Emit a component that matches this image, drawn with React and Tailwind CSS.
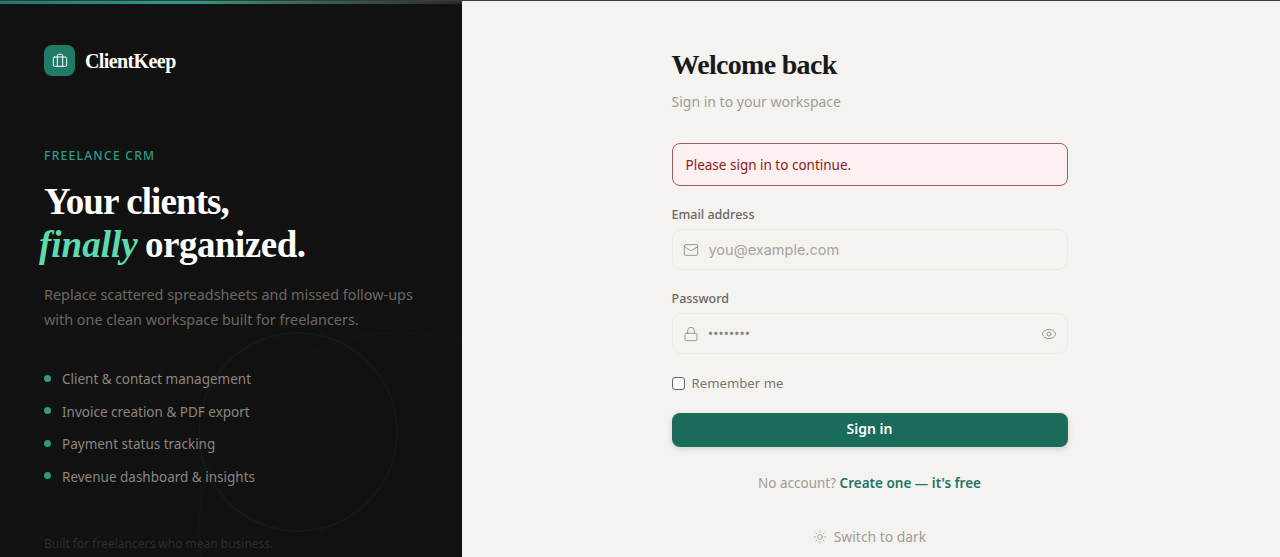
import { Briefcase, Mail, Lock, Eye, Sun } from 'lucide-react';

const features = [
  'Client & contact management',
  'Invoice creation & PDF export',
  'Payment status tracking',
  'Revenue dashboard & insights',
];

const serif = "font-['Liberation_Serif',serif]";

const BrandPanel = () => (
  <div className="relative flex h-[557px] w-[462px] shrink-0 flex-col overflow-hidden bg-[#111111] bg-[linear-gradient(90deg,rgba(255,255,255,0.005)_1px,transparent_1px)] bg-[size:40px_40px] px-11">
    <div className="absolute left-0 top-px h-[3px] w-full bg-gradient-to-r from-[#1f7a66] via-[#2a9d84] via-40% to-[#2a2a2a]" />
    <div className="absolute left-[198px] top-[332px] h-[200px] w-[200px] rounded-full border-2 border-[#2a9d84]/[0.07]" />
    <div className="absolute left-[198px] top-[332px] h-[400px] w-[400px] rounded-full border border-[#2a9d84]/[0.05]" />

    <div className="relative mt-[45px] flex items-center gap-[10px]">
      <div className="flex h-[31px] w-[31px] items-center justify-center rounded-lg bg-[#1f7a66] text-white">
        <Briefcase size={16} strokeWidth={1.5} />
      </div>
      <span className={`${serif} text-[20px] font-bold leading-[30px] tracking-[-0.6px] text-white`}>ClientKeep</span>
    </div>

    <p className="relative mt-[71px] text-[12px] font-medium leading-[18px] tracking-[1.3px] text-[#2a9d84]">FREELANCE CRM</p>

    <h1 className={`${serif} relative mt-[15px] text-[37px] font-bold leading-[43px] tracking-[-0.9px] text-white`}>
      Your clients,
      <br />
      <em className="-ml-[5px] -mr-[1px] tracking-[0px] text-[#5fd9ae]">finally</em>{' '}
      <span className="tracking-[-0.5px]">organized.</span>
    </h1>

    <p className="relative mt-[16px] text-[14.4px] leading-[25px] text-[#6b6864]">
      Replace scattered spreadsheets and missed follow-ups
      <br />
      with one clean workspace built for freelancers.
    </p>

    <ul className="relative mt-[37px] flex flex-col gap-[12.5px]">
      {features.map((item) => (
        <li key={item} className="flex items-center gap-[11px] text-[13.5px] leading-[20px] text-[#8a8680]">
          <span className="-mt-[2px] h-[7px] w-[7px] rounded-full bg-[#2a9d84]" />
          {item}
        </li>
      ))}
    </ul>

    <p className="relative mt-[48px] text-[12px] leading-[18px] text-[#2f2d2b]">Built for freelancers who mean business.</p>
  </div>
);

const Field = ({ label, icon, children }) => (
  <div>
    <label className="block text-[12.5px] font-medium leading-[18px] text-[#6b6864]">{label}</label>
    <div className="mt-[5px] flex h-[41px] items-center rounded-[10px] border border-[#ece9e4] bg-[#f4f3f0] px-[10px] text-[#9a9690]">
      {icon}
      {children}
    </div>
  </div>
);

const SignInForm = () => (
  <div className="flex h-[557px] flex-1 justify-center overflow-hidden bg-[#f4f3f0] pr-[3px]">
    <div className="w-[396px] pt-[46px]">
      <h2 className={`${serif} text-[28px] font-bold leading-[38px] tracking-[-0.7px] text-[#1a1a1a]`}>Welcome back</h2>
      <p className="mt-[8px] text-[14px] leading-[20px] text-[#a09c96]">Sign in to your workspace</p>

      <div className="mt-[31px] flex h-[43px] items-center rounded-lg border border-[#a85a5a] bg-[#fdf0f0] px-[13px] pt-[2px] text-[13.5px] text-[#8f2020]">
        Please sign in to continue.
      </div>

      <div className="mt-[20px] flex flex-col gap-[20px]">
        <Field label="Email address" icon={<Mail size={16} strokeWidth={1.5} />}>
          <span className="ml-[10px] font-['Inter',sans-serif] text-[14.5px] text-[#a8a49e]">you@example.com</span>
        </Field>
        <Field label="Password" icon={<Lock size={16} strokeWidth={1.5} />}>
          <span className="-mt-[2px] ml-[10px] flex-1 text-[11px] font-bold leading-none tracking-[1.1px] text-[#8a8680]">••••••••</span>
          <Eye size={16} strokeWidth={1.5} />
        </Field>
      </div>

      <label className="mt-[19px] flex items-center gap-[7px] text-[13.2px] leading-[20px] text-[#7a7671]">
        <span className="h-[13px] w-[13px] rounded-[3px] border border-[#6b6864] bg-[#fafafa]" />
        Remember me
      </label>

      <button className="mt-[20px] h-[34px] w-full rounded-lg bg-[#1a6b5a] pb-[3px] text-[14px] font-semibold text-white shadow-[0_2px_6px_rgba(0,0,0,0.15)]">
        Sign in
      </button>

      <p className="mt-[26px] text-center text-[13.5px] leading-[20px] text-[#a09c96]">
        No account? <a className="font-semibold text-[#1f7565]">Create one — it's free</a>
      </p>

      <div className="mt-[34px] flex items-center justify-center gap-[7px] text-[13.9px] leading-[20px] text-[#a09c96]">
        <Sun size={14} strokeWidth={1.5} />
        Switch to dark
      </div>
    </div>
  </div>
);

export default function App() {
  return (
    <div className="relative flex h-[557px] w-full overflow-hidden font-['Noto_Sans',sans-serif]">
      <div className="absolute left-0 top-0 z-10 h-px w-full bg-[#3a3a3a]" />
      <BrandPanel />
      <SignInForm />
    </div>
  );
}
